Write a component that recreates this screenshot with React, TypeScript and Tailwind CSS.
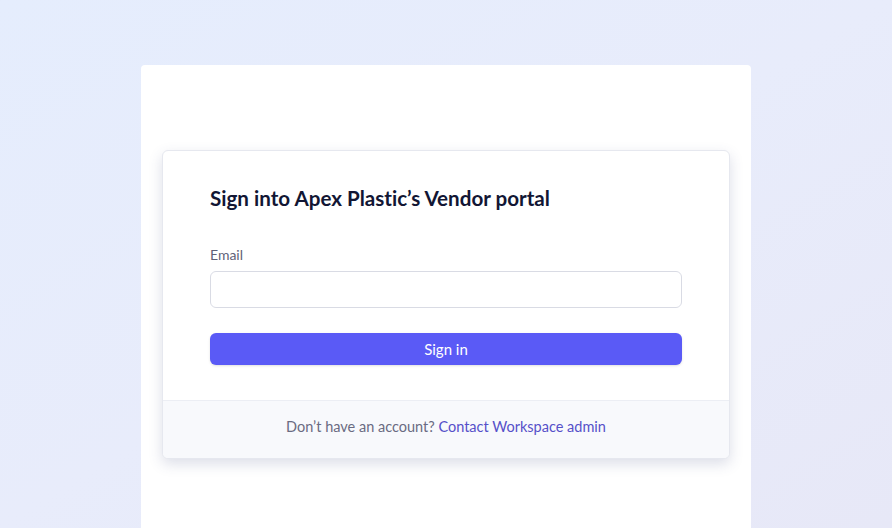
import React from 'react';

export default function App() {
  return (
    <div
      className="min-h-[528px] w-full flex justify-center pt-[65px] bg-gradient-to-br from-[#e5edfd] via-[#e8ecfb] to-[#e7e8f7] overflow-hidden"
      style={{ fontFamily: 'Lato, "Noto Sans", sans-serif', fontVariantLigatures: 'none' }}
    >
      <div className="w-[610px] h-[463px] bg-white rounded-t-[4px] px-[21px] pt-[85px]">
        <div className="rounded-md border border-[#e6e8ef] bg-white shadow-[0_5px_14px_rgba(60,70,130,0.18)] overflow-hidden">
          <div className="px-[47px] pt-[33px] pb-[35px]">
            <h1 className="text-[20.6px] leading-7 font-bold text-[#121634]">
              Sign into Apex Plastic’s Vendor portal
            </h1>
            <label className="block mt-[33px] text-[14px] leading-5 text-[#5f6178]">Email</label>
            <input
              type="email"
              className="mt-1.5 block w-full h-[37px] rounded-md border border-[#d9dbe4] bg-white px-3 text-sm outline-none"
            />
            <button
              type="button"
              className="mt-[25px] w-full h-[32px] rounded-md bg-[#5a5af6] text-white text-[15px] shadow-sm"
            >
              Sign in
            </button>
          </div>
          <div className="border-t border-[#eceef4] bg-[#f8f9fc] h-[58px] flex justify-center pt-4 leading-5 text-[14.5px] text-[#6a6b82]">
            Don’t have an account?&nbsp;
            <a href="#" className="text-[#5650c9]">Contact Workspace admin</a>
          </div>
        </div>
      </div>
    </div>
  );
}
